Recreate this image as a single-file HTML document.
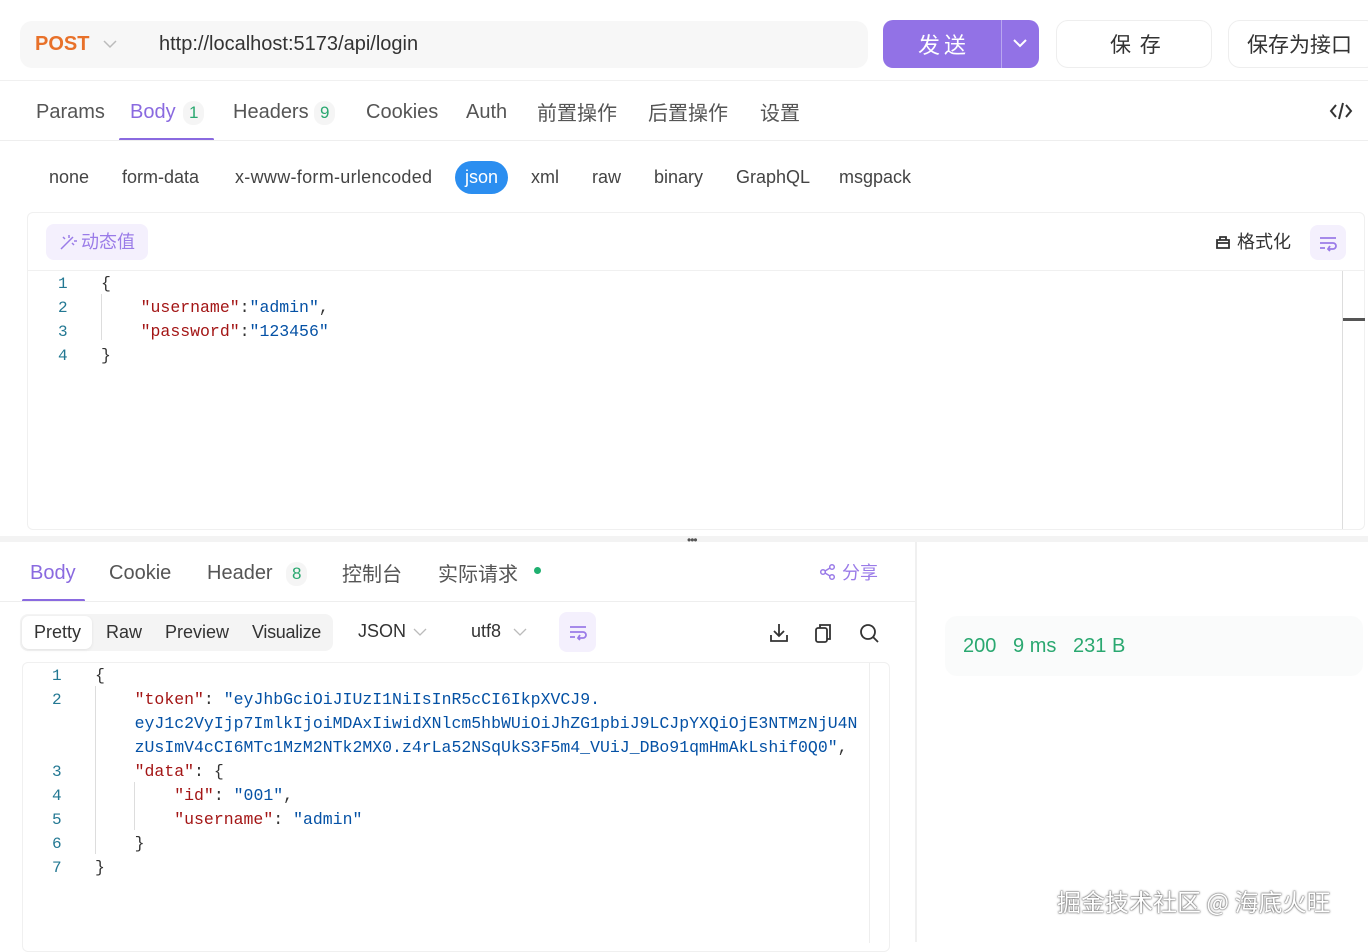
<!DOCTYPE html>
<html><head><meta charset="utf-8"><style>
*{box-sizing:border-box;margin:0;padding:0}
body{width:1368px;height:942px;overflow:hidden;background:#fff;font-family:"Liberation Sans","Noto Sans CJK SC",sans-serif;color:#444;position:relative}
.a{position:absolute;white-space:nowrap}
.mono{font-family:"Liberation Mono","Noto Sans CJK SC",monospace;font-size:16.5px}
.k{color:#a31515}.s{color:#0451a5}
.ln{color:#237893;position:absolute;font-family:"Liberation Mono",monospace;font-size:16px}
.cj{font-family:"Noto Sans CJK SC",sans-serif;line-height:1}
</style></head><body>
<!-- top bar -->
<div class="a" style="left:20px;top:21px;width:848px;height:47px;background:#f7f7f7;border-radius:12px"></div>
<div class="a" style="left:35px;top:33px;font-size:20px;font-weight:bold;color:#e8712a">POST</div>
<svg class="a" style="left:103px;top:39px" width="14" height="10"><path d="M1 2l6 6 6-6" stroke="#bbb" fill="none" stroke-width="1.5"/></svg>
<div class="a" style="left:159px;top:33px;font-size:20px;color:#333">http://localhost:5173/api/login</div>
<div class="a" style="left:883px;top:20px;width:156px;height:48px;background:#9272e6;border-radius:10px"></div>
<div class="a" style="left:1001px;top:20px;width:1px;height:48px;background:#b9a6f0"></div>
<div class="a cj" style="left:918px;top:33px;font-size:22px;color:#fff;letter-spacing:4px">发送</div>
<svg class="a" style="left:1012px;top:38px" width="16" height="10"><path d="M2 2l6 6 6-6" stroke="#fff" fill="none" stroke-width="2"/></svg>
<div class="a" style="left:1056px;top:20px;width:156px;height:48px;border:1px solid #eee;border-radius:12px"></div>
<div class="a cj" style="left:1110px;top:34px;font-size:21px;color:#333;letter-spacing:2px">保 存</div>
<div class="a" style="left:1228px;top:20px;width:150px;height:48px;border:1px solid #eee;border-radius:12px"></div>
<div class="a cj" style="left:1247px;top:34px;font-size:21px;color:#333">保存为接口</div>
<div class="a" style="left:0;top:80px;width:1368px;height:1px;background:#f0f0f0"></div>
<!-- tabs -->
<div class="a" style="top:101px;left:36px;font-size:20px;color:#555">Params</div>
<div class="a" style="top:101px;left:130px;font-size:20px;color:#8a6ae0">Body</div>
<div class="a" style="top:101px;left:183px;font-size:17px;color:#2aa870;background:#f5f5f5;border-radius:10px;padding:2px 6px">1</div>
<div class="a" style="left:119px;top:138px;width:95px;height:3px;background:#8a6ae0;border-radius:2px"></div>
<div class="a" style="top:101px;left:233px;font-size:20px;color:#555">Headers</div>
<div class="a" style="top:101px;left:314px;font-size:17px;color:#2aa870;background:#f5f5f5;border-radius:10px;padding:2px 6px">9</div>
<div class="a" style="top:101px;left:366px;font-size:20px;color:#555">Cookies</div>
<div class="a" style="top:101px;left:466px;font-size:20px;color:#555">Auth</div>
<div class="a cj" style="top:102px;left:537px;font-size:20px;color:#555">前置操作</div>
<div class="a cj" style="top:102px;left:648px;font-size:20px;color:#555">后置操作</div>
<div class="a cj" style="top:102px;left:760px;font-size:20px;color:#555">设置</div>
<svg class="a" style="left:1329px;top:101px" width="24" height="20"><path d="M7 4L2 10l5 6M17 4l5 6-5 6M14 2l-4 16" stroke="#333" fill="none" stroke-width="2"/></svg>
<div class="a" style="left:0;top:140px;width:1368px;height:1px;background:#eee"></div>
<!-- body types -->
<div class="a" style="top:167px;left:49px;font-size:18px;color:#444">none</div>
<div class="a" style="top:167px;left:122px;font-size:18px;color:#444">form-data</div>
<div class="a" style="top:167px;left:235px;font-size:18px;color:#444;letter-spacing:0.3px">x-www-form-urlencoded</div>
<div class="a" style="top:161px;left:455px;width:53px;height:33px;background:#2b8ef0;border-radius:17px;color:#fff;font-size:18px;text-align:center;line-height:32px">json</div>
<div class="a" style="top:167px;left:531px;font-size:18px;color:#444">xml</div>
<div class="a" style="top:167px;left:592px;font-size:18px;color:#444">raw</div>
<div class="a" style="top:167px;left:654px;font-size:18px;color:#444">binary</div>
<div class="a" style="top:167px;left:736px;font-size:18px;color:#444">GraphQL</div>
<div class="a" style="top:167px;left:839px;font-size:18px;color:#444">msgpack</div>
<!-- editor -->
<div class="a" style="left:27px;top:212px;width:1338px;height:318px;border:1px solid #f0f0f0;border-radius:6px"></div>
<div class="a" style="left:46px;top:224px;width:102px;height:36px;background:#f4f0fd;border-radius:8px"></div>
<svg class="a" style="left:59px;top:233px" width="18" height="18"><path d="M2 16L12 6M10 2v3M14 4l-2 2M15 8h3M4 4l2 2M15 12l-2-2" stroke="#9a7be8" fill="none" stroke-width="1.5"/></svg>
<div class="a cj" style="left:81px;top:232px;font-size:18px;color:#9a7be8">动态值</div>
<svg class="a" style="left:1214px;top:233px" width="18" height="18"><path d="M3 7h12v8H3zM6 7V4h6v3M3 10h12" stroke="#333" fill="none" stroke-width="1.8"/></svg>
<div class="a cj" style="left:1237px;top:232px;font-size:18px;color:#333">格式化</div>
<div class="a" style="left:1310px;top:225px;width:36px;height:35px;background:#f4f0fd;border-radius:8px"></div>
<svg class="a" style="left:1318px;top:234px" width="20" height="18"><path d="M2 4h16M2 9h13a3 3 0 010 6h-4M2 14h5M12 12l-2 3 2 2" stroke="#9a7be8" fill="none" stroke-width="1.8"/></svg>
<div class="a" style="left:28px;top:270px;width:1336px;height:1px;background:#f0f0f0"></div>
<div class="a" style="left:1342px;top:271px;width:1px;height:258px;background:#ddd"></div>
<div class="a" style="left:1343px;top:318px;width:22px;height:3px;background:#555"></div>
<div class="ln" style="left:58px;top:272px;line-height:24px">1<br>2<br>3<br>4</div>
<div class="a" style="left:101px;top:294px;width:1px;height:46px;background:#ddd"></div>
<div class="a mono" style="left:101px;top:272px;line-height:24px;color:#333">{<br>&nbsp;&nbsp;&nbsp;&nbsp;<span class="k">"username"</span>:<span class="s">"admin"</span>,<br>&nbsp;&nbsp;&nbsp;&nbsp;<span class="k">"password"</span>:<span class="s">"123456"</span><br>}</div>
<!-- splitter -->
<div class="a" style="left:0;top:536px;width:1368px;height:6px;background:#f3f3f3"></div>
<div class="a" style="left:687px;top:533px;font-size:12px;color:#555;letter-spacing:-1px">•••</div>
<!-- response tabs -->
<div class="a" style="left:915px;top:542px;width:2px;height:400px;background:#f0f0f0"></div>
<div class="a" style="top:562px;left:30px;font-size:20px;color:#8a6ae0">Body</div>
<div class="a" style="left:22px;top:599px;width:63px;height:3px;background:#8a6ae0;border-radius:2px"></div>
<div class="a" style="top:562px;left:109px;font-size:20px;color:#555">Cookie</div>
<div class="a" style="top:562px;left:207px;font-size:20px;color:#555">Header</div>
<div class="a" style="top:562px;left:286px;font-size:17px;color:#2aa870;background:#f5f5f5;border-radius:10px;padding:2px 6px">8</div>
<div class="a cj" style="top:563px;left:342px;font-size:20px;color:#555">控制台</div>
<div class="a cj" style="top:563px;left:438px;font-size:20px;color:#555">实际请求</div>
<div class="a" style="left:534px;top:567px;width:7px;height:7px;background:#1fb070;border-radius:50%"></div>
<svg class="a" style="left:819px;top:563px" width="18" height="18"><circle cx="13" cy="4" r="2.3" stroke="#9a7be8" fill="none" stroke-width="1.5"/><circle cx="4" cy="9" r="2.3" stroke="#9a7be8" fill="none" stroke-width="1.5"/><circle cx="13" cy="14" r="2.3" stroke="#9a7be8" fill="none" stroke-width="1.5"/><path d="M6 8l5-3M6 10l5 3" stroke="#9a7be8" stroke-width="1.5"/></svg>
<div class="a cj" style="top:563px;left:842px;font-size:18px;color:#9a7be8">分享</div>
<div class="a" style="left:0;top:601px;width:915px;height:1px;background:#eee"></div>
<!-- response toolbar -->
<div class="a" style="left:20px;top:614px;width:313px;height:37px;background:#f4f4f4;border-radius:8px"></div>
<div class="a" style="left:22px;top:616px;width:70px;height:33px;background:#fff;border-radius:7px;box-shadow:0 1px 3px rgba(0,0,0,.08)"></div>
<div class="a" style="top:622px;left:34px;font-size:18px;color:#333">Pretty</div>
<div class="a" style="top:622px;left:106px;font-size:18px;color:#333">Raw</div>
<div class="a" style="top:622px;left:165px;font-size:18px;color:#333">Preview</div>
<div class="a" style="top:622px;left:252px;font-size:18px;color:#333;letter-spacing:-0.3px">Visualize</div>
<div class="a" style="top:621px;left:358px;font-size:18px;color:#333">JSON</div>
<svg class="a" style="left:413px;top:628px" width="14" height="9"><path d="M1 1l6 6 6-6" stroke="#bbb" fill="none" stroke-width="1.3"/></svg>
<div class="a" style="top:621px;left:471px;font-size:18px;color:#333">utf8</div>
<svg class="a" style="left:513px;top:628px" width="14" height="9"><path d="M1 1l6 6 6-6" stroke="#bbb" fill="none" stroke-width="1.3"/></svg>
<div class="a" style="left:559px;top:612px;width:37px;height:40px;background:#f4f0fd;border-radius:8px"></div>
<svg class="a" style="left:568px;top:624px" width="20" height="18"><path d="M2 3h16M2 8h13a3 3 0 010 6h-4M2 13h5M12 11l-2 3 2 2" stroke="#9a7be8" fill="none" stroke-width="1.8"/></svg>
<svg class="a" style="left:768px;top:622px" width="22" height="22"><path d="M11 2v11M6 9l5 5 5-5M3 13v6h16v-6" stroke="#333" fill="none" stroke-width="1.8"/></svg>
<svg class="a" style="left:813px;top:622px" width="22" height="22"><rect x="3" y="6" width="11" height="14" rx="2" stroke="#333" fill="none" stroke-width="1.8"/><path d="M7 6V3h10v14h-3" stroke="#333" fill="none" stroke-width="1.8"/></svg>
<svg class="a" style="left:858px;top:622px" width="22" height="22"><circle cx="10" cy="10" r="7" stroke="#333" fill="none" stroke-width="1.8"/><path d="M15 15l5 5" stroke="#333" stroke-width="1.8"/></svg>
<!-- response code -->
<div class="a" style="left:22px;top:662px;width:868px;height:290px;border:1px solid #f0f0f0;border-radius:6px"></div>
<div class="a" style="left:869px;top:663px;width:1px;height:280px;background:#eee"></div>
<div class="ln" style="left:52px;top:664px;line-height:24px">1<br>2<br><br><br>3<br>4<br>5<br>6<br>7</div>
<div class="a" style="left:95px;top:686px;width:1px;height:168px;background:#ddd"></div>
<div class="a" style="left:134px;top:782px;width:1px;height:48px;background:#ddd"></div>
<div class="a mono" style="left:95px;top:664px;line-height:24px;color:#333">{<br>&nbsp;&nbsp;&nbsp;&nbsp;<span class="k">"token"</span>: <span class="s">"eyJhbGciOiJIUzI1NiIsInR5cCI6IkpXVCJ9.</span><br>&nbsp;&nbsp;&nbsp;&nbsp;<span class="s">eyJ1c2VyIjp7ImlkIjoiMDAxIiwidXNlcm5hbWUiOiJhZG1pbiJ9LCJpYXQiOjE3NTMzNjU4N</span><br>&nbsp;&nbsp;&nbsp;&nbsp;<span class="s">zUsImV4cCI6MTc1MzM2NTk2MX0.z4rLa52NSqUkS3F5m4_VUiJ_DBo91qmHmAkLshif0Q0"</span>,<br>&nbsp;&nbsp;&nbsp;&nbsp;<span class="k">"data"</span>: {<br>&nbsp;&nbsp;&nbsp;&nbsp;&nbsp;&nbsp;&nbsp;&nbsp;<span class="k">"id"</span>: <span class="s">"001"</span>,<br>&nbsp;&nbsp;&nbsp;&nbsp;&nbsp;&nbsp;&nbsp;&nbsp;<span class="k">"username"</span>: <span class="s">"admin"</span><br>&nbsp;&nbsp;&nbsp;&nbsp;}<br>}</div>
<!-- status -->
<div class="a" style="left:945px;top:616px;width:418px;height:60px;background:#fafbfb;border-radius:12px"></div>
<div class="a" style="left:963px;top:635px;font-size:20px;color:#2aa870">200&nbsp;&nbsp;&nbsp;9 ms&nbsp;&nbsp;&nbsp;231 B</div>
<div class="a cj" style="left:1057px;top:889px;font-size:24px;color:#fff;text-shadow:0 0 2px #555,0 0 1px #333">掘金技术社区 @ 海底火旺</div>
</body></html>
